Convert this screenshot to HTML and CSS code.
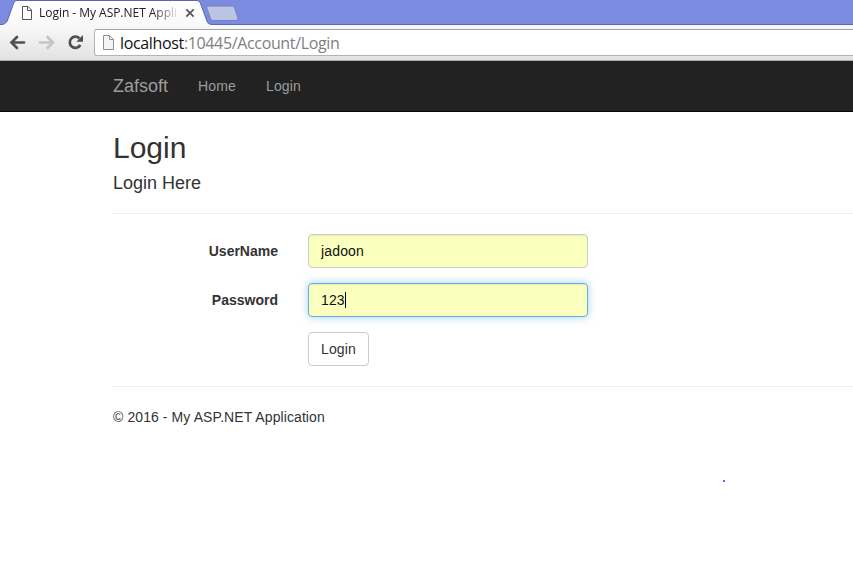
FILE: index.html
```
<!DOCTYPE html>
<html lang="en">
<head>
<meta charset="utf-8">
<title>Login - My ASP.NET Application</title>
<link rel="stylesheet" href="styles.css">
</head>
<body>
<header class="browser">
  <div class="tabstrip">
    <svg class="tab-shape" width="853" height="25" viewBox="0 0 853 25">
      <defs>
        <linearGradient id="tab" x1="0" y1="0" x2="0" y2="1"><stop offset="0" stop-color="#fff"/><stop offset="1" stop-color="#f9f9f9"/></linearGradient>
      </defs>
      <path d="M0 24.5H3C6 24.5 7 22 8 19L13 5C14 2 15 .5 18 .5H196C199 .5 200 2 201 5L207 21C208 23.500 209 24.500 212 24.500H853" fill="none" stroke="#5b66b0"/>
      <path d="M0 25C5 25 7 23 8.500 19L13.500 5C14.500 2 15 1 18 1H196C199 1 199.500 2 200.500 5L206 20C207 23.500 209 25 212 25Z" fill="url(#tab)"/>
      <path d="M209 6H231C233 6 234 6.500 234.800 8.500L237.500 17C238.200 19.500 237.500 20.500 235.500 20.500H214C212 20.500 211 20 210.300 18L207 8.500C206.500 6.500 207 6 209 6Z" fill="#bcc4e4" stroke="#7580c4"/>
    </svg>
    <svg class="tab-page" width="12" height="14" viewBox="0 0 12 14"><path d="M1.500 .5H7L10.500 4V13.500H1.500ZM6.500 .5V4.500H10.500" fill="#fff" stroke="#555"/></svg>
    <span class="tab-title">Login - My ASP.NET Appli</span>
    <svg class="tab-close" width="10" height="10" viewBox="0 0 10 10"><path d="M1.300 1.300L8.700 8.700M8.700 1.300L1.300 8.700" stroke="#555" stroke-width="1.700"/></svg>
  </div>
  <div class="toolbar">
    <svg class="controls" width="94" height="35" viewBox="0 0 94 35">
      <g fill="none" stroke-width="2.700">
        <path d="M11.500 17.500H24M17 12L11.500 17.500L17 23" stroke="#505050" stroke-linecap="round"/>
        <path d="M40 17.500H52M47.500 12L53 17.500L47.500 23" stroke="#c5c5c5" stroke-linecap="round"/>
        <path d="M79.500 13.500A5.600 5.600 0 1 0 80.300 20" stroke="#505050"/>
      </g>
      <path d="M83 10V16.700H76.300Z" fill="#505050"/>
    </svg>
    <div class="address">
      <svg class="page-icon" width="13" height="16" viewBox="0 0 13 16"><path d="M1.500 .5H7.500L11.500 4.500V14.500H1.500ZM7.500 .5V4.500H11.500" fill="#f4f4f4" stroke="#919191"/></svg>
      <span class="url"><b>localhost</b>:10445/Account/Login</span>
    </div>
  </div>
</header>
<nav class="navbar">
  <a class="brand">Zafsoft</a>
  <a class="link">Home</a>
  <a class="link">Login</a>
</nav>
<main class="content">
  <h2>Login</h2>
  <h4>Login Here</h4>
  <hr>
  <form class="form">
    <label for="user">UserName</label>
    <input id="user" class="control" type="text" value="jadoon">
    <label for="pass">Password</label>
    <div id="pass" class="control focused">123<span class="caret"></span></div>
    <button class="btn" type="button">Login</button>
  </form>
  <hr>
  <footer>© 2016 - My ASP.NET Application</footer>
</main>
<i class="speck"></i>
</body>
</html>
```
FILE: styles.css
```
* { box-sizing: border-box; }
body {
  margin: 0;
  height: 583px;
  overflow: hidden;
  background: #fff;
  color: #333;
  font: 14px/20px "Liberation Sans", Arial, sans-serif;
}
.browser { height: 61px; font-family: "Open Sans", "Noto Sans", sans-serif; }
.tabstrip {
  position: relative;
  display: flex;
  align-items: center;
  height: 25px;
  padding-left: 21px;
  background: #7b8be0;
}
.tab-shape { position: absolute; left: 0; top: 0; }
.tab-page, .tab-title, .tab-close { position: relative; flex: none; }
.tab-title {
  width: 139px;
  margin: 0 7px 0 6px;
  overflow: hidden;
  white-space: nowrap;
  font-size: 12px;
  letter-spacing: -.03px;
  color: #222;
  -webkit-mask-image: linear-gradient(90deg, #000 114px, transparent 141px);
  mask-image: linear-gradient(90deg, #000 114px, transparent 141px);
}
.toolbar {
  display: flex;
  height: 36px;
  background: linear-gradient(#f9f9f9, #e2e2e2);
  border-bottom: 1px solid #a9aba9;
}
.controls { flex: none; }
.address {
  display: flex;
  align-items: center;
  flex: 1;
  height: 27px;
  margin-top: 4px;
  padding-left: 7px;
  background: #fff;
  border: 1px solid #b4b4b4;
  border-top-color: #a5a5a5;
  border-right: 0;
  border-radius: 3px 0 0 3px;
}
.page-icon { flex: none; margin-right: 5px; }
.url { font-size: 16px; letter-spacing: -.35px; color: #808080; white-space: nowrap; }
.url b { font-weight: 400; color: #111; }
.navbar {
  display: flex;
  height: 51px;
  padding-left: 98px;
  background: #222;
  border-bottom: 1px solid #080808;
  color: #9d9d9d;
}
.brand, .link { padding: 15px; }
.brand { font-size: 18px; }
.link { letter-spacing: .15px; }
.content { margin: -1px 0 0 113px; padding-top: 20px; }
h2, h4 { margin: 0 0 10px; font-weight: 400; line-height: 1.1; }
h2 { font-size: 30px; }
h4 { font-size: 18px; }
hr { margin: 19px 0 20px; border: 0; border-top: 1px solid #eee; }
h4 + hr { margin-top: 19.2px; }
.form {
  display: grid;
  grid-template-columns: 165px 280px;
  column-gap: 30px;
  row-gap: 15px;
}
label { padding-top: 7px; text-align: right; font-weight: 700; }
.control {
  width: 280px;
  height: 34px;
  padding: 6px 12px;
  font: inherit;
  letter-spacing: .15px;
  color: #111;
  background: #faffbd;
  border: 1px solid #ccc;
  border-radius: 4px;
  box-shadow: inset 0 1px 1px rgba(0, 0, 0, .075);
}
.focused {
  border-color: #66afe9;
  box-shadow: inset 0 1px 1px rgba(0, 0, 0, .075), 0 0 8px rgba(102, 175, 233, .6);
}
.caret { display: inline-block; width: 1px; height: 16px; margin-left: .3px; background: #000; vertical-align: -3px; }
.btn {
  grid-column: 2;
  justify-self: start;
  width: 61px;
  height: 34px;
  padding: 6px 12px;
  font: inherit;
  letter-spacing: .15px;
  color: #333;
  background: #fff;
  border: 1px solid #ccc;
  border-radius: 4px;
}
.form + hr { margin-top: 20px; }
footer { letter-spacing: .09px; }
.speck { position: absolute; left: 723px; top: 480px; width: 2px; height: 2px; border-radius: 1px; background: #33f; }
```
